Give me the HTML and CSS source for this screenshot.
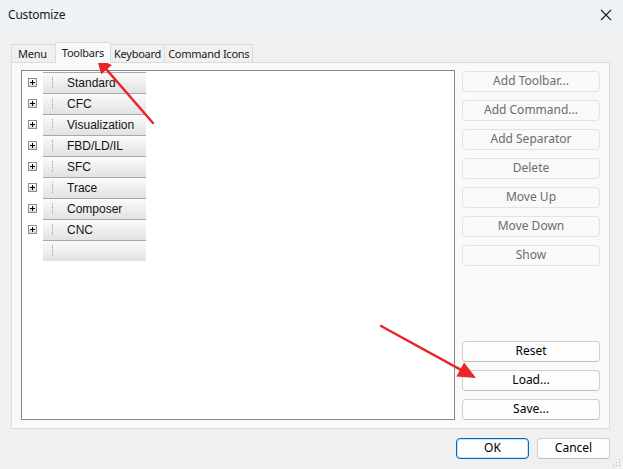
FILE: index.html
```html
<!DOCTYPE html>
<html lang="en">
<head>
  <meta charset="utf-8">
  <title>Customize</title>
  <link rel="stylesheet" href="styles.css">
</head>
<body>

  <div class="dialog">
    <header class="titlebar">
      <span class="title">Customize</span>
      <svg class="close" width="12" height="12" viewBox="0 0 12 12">
        <path d="M1 1 L11 11 M11 1 L1 11" stroke="#1a1a1a" stroke-width="1.1" fill="none"/>
      </svg>
    </header>

    <div class="client">
      <div class="tabs">
        <div class="tab">Menu</div>
        <div class="tab active">Toolbars</div>
        <div class="tab">Keyboard</div>
        <div class="tab">Command Icons</div>
      </div>

      <div class="panel">
        <div class="tree">
          <div class="row"><span class="plus"></span><div class="bar"><i class="grip"></i>Standard</div></div>
          <div class="row"><span class="plus"></span><div class="bar"><i class="grip"></i>CFC</div></div>
          <div class="row"><span class="plus"></span><div class="bar"><i class="grip"></i>Visualization</div></div>
          <div class="row"><span class="plus"></span><div class="bar"><i class="grip"></i>FBD/LD/IL</div></div>
          <div class="row"><span class="plus"></span><div class="bar"><i class="grip"></i>SFC</div></div>
          <div class="row"><span class="plus"></span><div class="bar"><i class="grip"></i>Trace</div></div>
          <div class="row"><span class="plus"></span><div class="bar"><i class="grip"></i>Composer</div></div>
          <div class="row"><span class="plus"></span><div class="bar"><i class="grip"></i>CNC</div></div>
          <div class="row"><span class="noplus"></span><div class="bar"><i class="grip"></i></div></div>
        </div>

        <div class="actions">
          <div class="group">
            <button disabled>Add Toolbar...</button>
            <button disabled>Add Command...</button>
            <button disabled>Add Separator</button>
            <button disabled>Delete</button>
            <button disabled>Move Up</button>
            <button disabled>Move Down</button>
            <button disabled>Show</button>
          </div>
          <div class="group">
            <button>Reset</button>
            <button>Load...</button>
            <button>Save...</button>
          </div>
        </div>
      </div>

      <div class="footer">
        <button class="default">OK</button>
        <button>Cancel</button>
      </div>
    </div>

    <!-- annotation arrows drawn over the dialog -->
    <svg class="arrows" width="623" height="469" viewBox="0 0 623 469">
      <g stroke="#e8252b" stroke-width="2.4" stroke-linecap="round" fill="#e8252b">
        <line x1="153" y1="123" x2="106.6" y2="69.6"/>
        <polygon points="96.7,58.3 111.9,65 101.3,74.2" stroke="none"/>
        <line x1="381" y1="326" x2="460" y2="369.4"/>
        <polygon points="476,378 456.4,376.4 464.1,362.4" stroke="none"/>
      </g>
    </svg>

    <svg class="sizegrip" width="8" height="8" viewBox="0 0 8 8">
      <g fill="#b0b0b0">
        <rect x="6" y="0" width="1" height="1"/>
        <rect x="3" y="3" width="1" height="1"/><rect x="6" y="3" width="1" height="1"/>
        <rect x="0" y="6" width="1" height="1"/><rect x="3" y="6" width="1" height="1"/><rect x="6" y="6" width="1" height="1"/>
      </g>
    </svg>
  </div>

</body>
</html>
```

FILE: styles.css
```css
* {
  margin: 0;
  padding: 0;
  box-sizing: border-box;
}

html {
  font-family: "Noto Sans", "Open Sans", sans-serif;
  font-size: 12px;
  line-height: 1.2;
}

:root {
  --face: #f0f0f0;
  --panel: #f9f9f9;
  --title: #eef2f5;
  --line: #dcdcdc;
  --list-border: #828790;
  --blue: #0067c0;
}

body {
  background: var(--face);
  color: #000;
}

.dialog {
  position: relative;
  width: 623px;
  height: 469px;
  overflow: hidden;
  background: var(--face);
}

.titlebar {
  display: flex;
  align-items: center;
  justify-content: space-between;
  height: 30px;
  padding: 0 11px 0 8px;
  background: var(--title);
}
.title {
  padding-top: 1px;
  color: #1a1a1a;
  letter-spacing: -0.2px;
}

.client {
  padding: 12px 13px 0 11px;
}

/* tabs */
.tabs {
  display: flex;
  align-items: flex-end;
  height: 20px;
  position: relative;
  z-index: 1;
  font-size: 11px;
  letter-spacing: -0.25px;
}
.tab {
  height: 18px;
  padding: 0 3px;
  border: 1px solid var(--line);
  border-bottom: 0;
  border-right: 0;
  background: var(--face);
  line-height: 18px;
  color: #1a1a1a;
}
.tab:first-child {
  padding: 0 8px 0 6px;
}
.tab:last-child {
  border-right: 1px solid var(--line);
}
.tab.active {
  height: 21px;
  margin-bottom: -1px;
  padding: 0 6px;
  border-right: 1px solid var(--line);
  background: var(--panel);
  line-height: 19px;
}
.tab.active + .tab {
  border-left: 0;
  padding: 0 3px;
}

.panel {
  display: flex;
  gap: 7px;
  height: 367px;
  padding: 7px 9px 8px 9px;
  border: 1px solid var(--line);
  background: var(--panel);
}

/* toolbar tree */
.tree {
  width: 434px;
  height: 350px;
  padding-top: 1px;
  border: 1px solid var(--list-border);
  background: #fff;
  font-family: "Liberation Sans", Arial, sans-serif;
}
.row {
  display: flex;
  align-items: center;
  height: 21px;
}
.plus,
.noplus {
  width: 9px;
  height: 9px;
  margin: 0 6px 0 6px;
}
.plus {
  position: relative;
  border: 1px solid #8c8c8c;
  background: linear-gradient(#ffffff, #d6dcd6);
}
.plus::before,
.plus::after {
  content: "";
  position: absolute;
  background: #000;
}
.plus::before {
  left: 1px;
  top: 3px;
  width: 5px;
  height: 1px;
}
.plus::after {
  left: 3px;
  top: 1px;
  width: 1px;
  height: 5px;
}
.bar {
  display: flex;
  align-items: center;
  width: 103px;
  height: 21px;
  padding-left: 9px;
  border-top: 1px solid #a8a8a8;
  background: linear-gradient(#fbfbfb, #ececec 60%, #e2e2e2);
  color: #141414;
}
.grip {
  width: 1px;
  height: 12px;
  margin-right: 14px;
  background: repeating-linear-gradient(#a0a0a0 0 1px, transparent 1px 2px);
}

/* button column */
.actions {
  display: flex;
  flex-direction: column;
  justify-content: space-between;
  width: 138px;
  padding-top: 1px;
}
.group {
  display: flex;
  flex-direction: column;
  gap: 8px;
}

button {
  height: 21px;
  border: 1px solid #d0d0d0;
  border-bottom-color: #bdbdbd;
  border-radius: 4px;
  background: #fdfdfd;
  font: inherit;
  color: #000;
}
button:disabled {
  border-color: #e3e3e3;
  background: #f9f9f9;
  color: #6c6c6c;
}

.footer {
  display: flex;
  justify-content: flex-end;
  gap: 8px;
  margin-top: 9px;
}
.footer button {
  width: 73px;
}
.footer button.default {
  border: 1px solid var(--blue);
  box-shadow: inset 0 0 0 1px #cfe2f3;
}

/* overlays */
.arrows {
  position: absolute;
  left: 0;
  top: 0;
  pointer-events: none;
}
.sizegrip {
  position: absolute;
  right: 2px;
  bottom: 2px;
}
```
